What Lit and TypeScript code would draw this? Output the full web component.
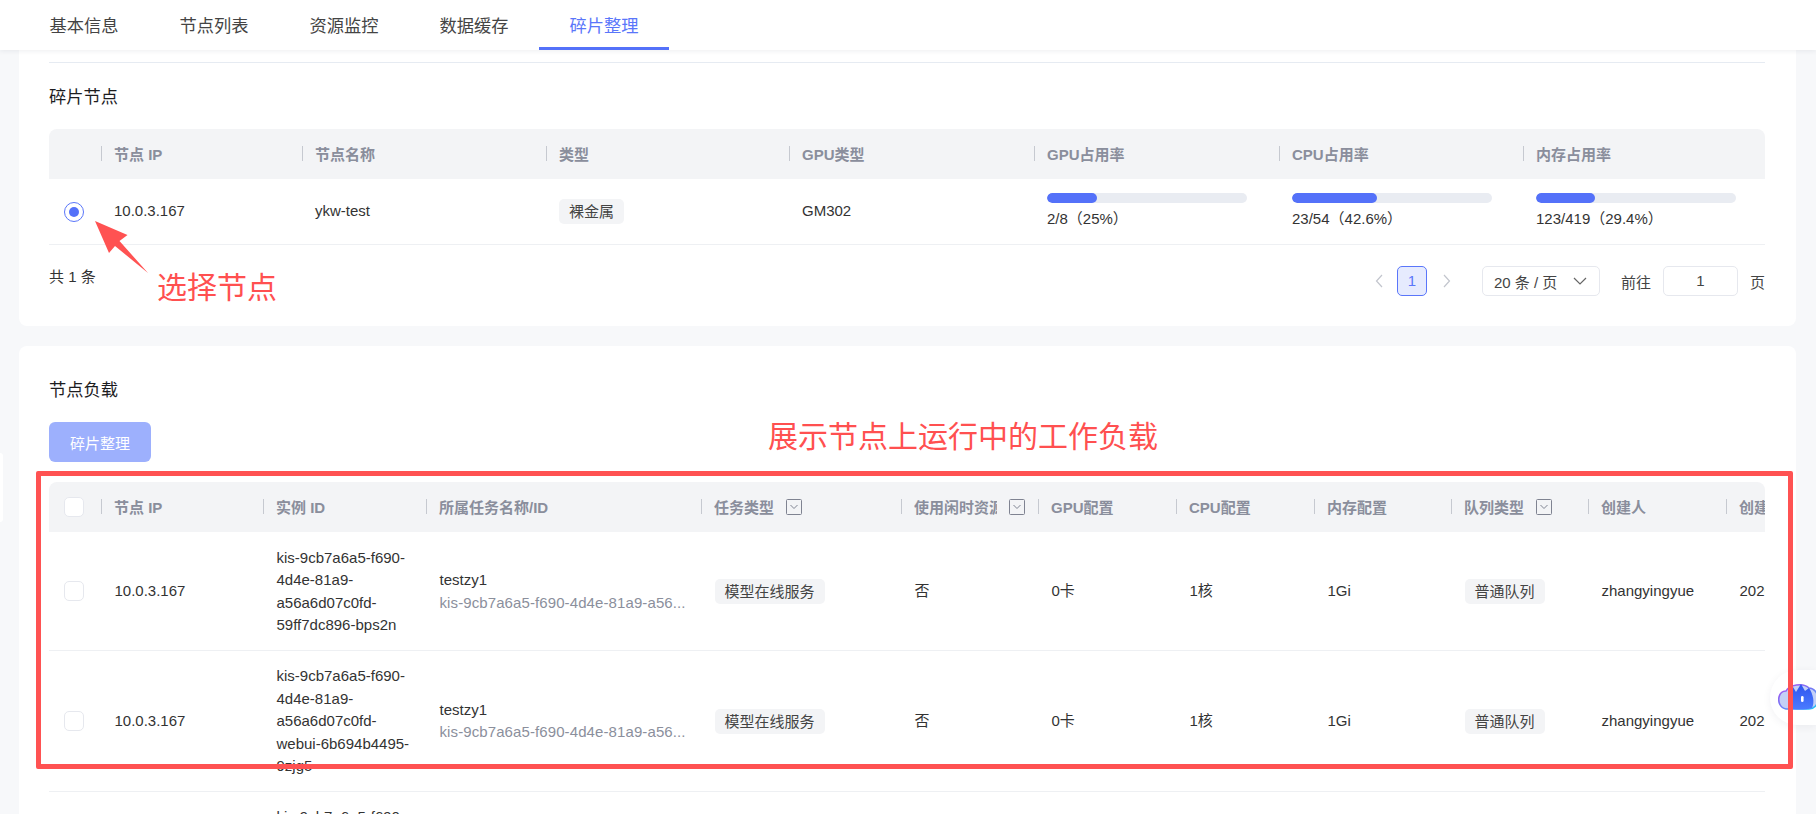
import { LitElement, html, css, svg } from 'lit';
import { customElement } from 'lit/decorators.js';

const NODE_COLS = [52, 201, 244, 243, 245, 245, 244, 242];
const LOAD_COLS = [52, 162, 163, 275, 200, 137, 138, 138, 137, 137, 138, 300];

const USAGE = [
  { pct: 25, text: '2/8（25%）' },
  { pct: 42.6, text: '23/54（42.6%）' },
  { pct: 29.4, text: '123/419（29.4%）' },
];

const LOAD_HEADERS = [
  { label: '节点 IP' },
  { label: '实例 ID' },
  { label: '所属任务名称/ID' },
  { label: '任务类型', filter: true },
  { label: '使用闲时资源', filter: true, clip: true },
  { label: 'GPU配置' },
  { label: 'CPU配置' },
  { label: '内存配置' },
  { label: '队列类型', filter: true },
  { label: '创建人' },
  { label: '创建时间' },
];

const TASK_ID = 'kis-9cb7a6a5-f690-4d4e-81a9-a56...';

const LOAD_ROWS = [
  'kis-9cb7a6a5-f690-4d4e-81a9-a56a6d07c0fd-59ff7dc896-bps2n',
  'kis-9cb7a6a5-f690-4d4e-81a9-a56a6d07c0fd-webui-6b694b4495-9zjg5',
  'kis-9cb7a6a5-f690-4d4e-81a9-a56a6d07c0fd-59ff7dc896-x7mkd',
];

@customElement('app-root')
export class AppRoot extends LitElement {
  static styles = css`
    :host {
      display: block;
      position: relative;
      height: 814px;
      overflow: hidden;
      background: #f7f8fa;
      color: #333;
      font-family: 'Liberation Sans', 'Noto Sans CJK SC', sans-serif;
      font-size: 15px;
    }

    .tabs {
      display: flex;
      position: relative;
      z-index: 2;
      height: 50px;
      padding-left: 19px;
      background: #fff;
      box-shadow: 0 1px 5px rgba(30, 40, 70, 0.08);
    }
    .tab {
      box-sizing: border-box;
      width: 130px;
      line-height: 52px;
      text-align: center;
      font-size: 17.25px;
      color: #444;
    }
    .tab.active {
      color: #5a76fa;
      border-bottom: 3px solid #5471f9;
    }

    .main {
      padding: 0 20px 0 19px;
    }
    .card {
      background: #fff;
      border-radius: 8px;
      padding: 32px 31px 30px 30px;
      margin-bottom: 20px;
    }
    .card.first {
      padding-top: 12px;
      border-radius: 0 0 8px 8px;
    }
    .rule {
      height: 1px;
      background: #e6ebf2;
      margin-bottom: 22px;
    }
    .title {
      font-size: 17.25px;
      line-height: 24px;
      color: #1d1d1f;
      margin-bottom: 20px;
    }

    .tidy {
      display: block;
      width: 102px;
      height: 40px;
      margin-bottom: 20px;
      padding: 0;
      border: none;
      border-radius: 6px;
      background: #9db0fd;
      color: #fff;
      font: inherit;
    }

    .table-wrap {
      overflow: hidden;
      border-radius: 8px 8px 0 0;
    }
    table {
      table-layout: fixed;
      border-collapse: collapse;
    }
    th {
      box-sizing: border-box;
      height: 50px;
      padding: 0 0 1px;
      background: #f3f4f6;
      text-align: left;
      font-weight: 700;
      color: #8a8e9c;
    }
    .th-label {
      display: flex;
      align-items: center;
      height: 15px;
      padding-left: 12px;
      border-left: 1px solid #c6c9d0;
      white-space: nowrap;
    }
    .clip {
      display: block;
      width: 83px;
      overflow: hidden;
    }
    .filter {
      flex: none;
      margin-left: 12px;
    }
    td {
      padding: 14.5px 13px 13px 13.5px;
      border-bottom: 1px solid #eef0f3;
      line-height: 22.5px;
      vertical-align: middle;
    }
    .nodes td {
      padding: 13.5px 13px 14px;
    }
    td.select,
    .nodes td.select {
      padding: 0 0 0 15px;
    }
    .instance {
      overflow-wrap: anywhere;
      word-break: normal;
    }
    .sub {
      color: #8b8f9c;
      white-space: nowrap;
      letter-spacing: 0.1px;
    }
    .nowrap {
      white-space: nowrap;
    }

    .radio {
      display: flex;
      align-items: center;
      justify-content: center;
      box-sizing: border-box;
      width: 20px;
      height: 20px;
      border: 1px solid #5a76fa;
      border-radius: 50%;
    }
    .radio i {
      width: 10px;
      height: 10px;
      border-radius: 50%;
      background: #5471f9;
    }
    .check {
      display: block;
      box-sizing: border-box;
      width: 20px;
      height: 20px;
      background: #fff;
      border: 1px solid #e6e8ee;
      border-radius: 5px;
    }
    th .check {
      margin-left: 15px;
    }
    .tag {
      display: inline-block;
      height: 25px;
      padding: 0 10px;
      line-height: 25px;
      border-radius: 5px;
      background: #f3f4f6;
      color: #444;
      vertical-align: middle;
    }
    .track {
      width: 200px;
      height: 10px;
      margin-bottom: 5px;
      border-radius: 5px;
      background: #e9ecf2;
      overflow: hidden;
    }
    .fill {
      height: 100%;
      border-radius: 5px;
      background: #5471f9;
    }

    .pager-row {
      display: flex;
      align-items: flex-start;
      justify-content: space-between;
      margin-top: 21px;
      height: 30px;
    }
    .total {
      line-height: 22px;
    }
    .pager {
      display: flex;
      align-items: center;
      color: #444;
    }
    .arrow {
      display: flex;
      align-items: center;
      justify-content: center;
      width: 30px;
      height: 30px;
    }
    .page {
      box-sizing: border-box;
      width: 30px;
      height: 30px;
      margin: 0 5px 0 3px;
      border: 1px solid #5a76fa;
      border-radius: 5px;
      background: #e6ebfe;
      color: #5a76fa;
      line-height: 28px;
      text-align: center;
    }
    .size {
      display: flex;
      align-items: center;
      justify-content: space-between;
      box-sizing: border-box;
      width: 118px;
      height: 30px;
      margin: 0 21px 0 20px;
      padding: 0 12px 0 11px;
      border: 1px solid #e6e8ee;
      border-radius: 5px;
    }
    .jump {
      box-sizing: border-box;
      width: 75px;
      height: 30px;
      margin: 0 12px;
      border: 1px solid #e6e8ee;
      border-radius: 5px;
      line-height: 28px;
      text-align: center;
    }

    .edge {
      position: absolute;
      left: 0;
      top: 453px;
      width: 3px;
      height: 69px;
      background: #fff;
      border-radius: 0 6px 6px 0;
    }
    .assistant {
      position: absolute;
      right: 0;
      top: 670px;
      width: 46px;
      height: 55px;
      background: #fff;
      border-radius: 28px 0 0 28px;
      box-shadow: 0 2px 8px rgba(30, 40, 70, 0.06);
    }
    .assistant svg {
      position: absolute;
      left: 8px;
      top: 12px;
    }
    .note {
      position: absolute;
      font-size: 30px;
      line-height: 36px;
      color: #ff5050;
      white-space: nowrap;
    }
    .note.pick {
      left: 157px;
      top: 270px;
    }
    .note.loads {
      left: 768px;
      top: 419px;
    }
    .pointer {
      position: absolute;
      left: 90px;
      top: 216px;
    }
    .frame {
      position: absolute;
      left: 36px;
      top: 471px;
      box-sizing: border-box;
      width: 1757px;
      height: 298px;
      border: 5px solid #ff5252;
      border-radius: 2px;
    }
  `;

  private chevron(points: string, color: string, width = 12) {
    return html`<svg width=${width} height="16" viewBox="0 0 ${width} 16" fill="none">
      <polyline points=${points} stroke=${color} stroke-width="1.2" />
    </svg>`;
  }

  private filterIcon() {
    return html`<svg class="filter" width="16" height="16" viewBox="0 0 16 16" fill="none" stroke="#7f8391">
      <rect x="0.5" y="0.5" width="15" height="15" rx="1" />
      <polyline points="4.5,6 8,9.5 11.5,6" />
    </svg>`;
  }

  private colgroup(widths: number[]) {
    return html`<colgroup>
      ${widths.map((w) => html`<col style="width:${w}px" />`)}
    </colgroup>`;
  }

  private logo() {
    return html`<svg width="40" height="30" viewBox="0 0 40 30" fill="none">
      <defs>
        <linearGradient id="rim" x1="0" y1="0" x2="0.9" y2="1">
          <stop offset="0" stop-color="#b04df0" />
          <stop offset="0.55" stop-color="#6f7cf6" />
          <stop offset="1" stop-color="#27c4f2" />
        </linearGradient>
        <linearGradient id="flame" x1="0" y1="0" x2="0" y2="1">
          <stop offset="0" stop-color="#2f55ee" />
          <stop offset="1" stop-color="#4a7bff" />
        </linearGradient>
      </defs>
      ${svg`<path d="M8 27C2 26 0 20 1 15C2 11 5 9 8 9C11 3 25 0 31 6C36 6 40 11 40 17C40 23 36 27 31 27Z" fill="#c3d0f7" stroke="url(#rim)" stroke-width="1.6" />
      <path d="M11 26C9 18 12 10 15 5L18 10L23 2L27 9L31 6C35 12 37 20 34 26C28 28 16 28 11 26Z" fill="url(#flame)" />
      <rect x="23" y="14" width="2.6" height="6" rx="1.3" fill="#fff" />`}
    </svg>`;
  }

  private renderNodes() {
    return html`
      <div class="table-wrap">
        <table class="nodes" style="width:${NODE_COLS.reduce((a, b) => a + b, 0)}px">
          ${this.colgroup(NODE_COLS)}
          <thead>
            <tr>
              <th></th>
              ${['节点 IP', '节点名称', '类型', 'GPU类型', 'GPU占用率', 'CPU占用率', '内存占用率'].map(
                (h) => html`<th><span class="th-label">${h}</span></th>`,
              )}
            </tr>
          </thead>
          <tbody>
            <tr>
              <td class="select"><span class="radio"><i></i></span></td>
              <td>10.0.3.167</td>
              <td>ykw-test</td>
              <td><span class="tag">裸金属</span></td>
              <td>GM302</td>
              ${USAGE.map(
                (u) => html`<td>
                  <div class="track"><div class="fill" style="width:${u.pct}%"></div></div>
                  <div class="nowrap">${u.text}</div>
                </td>`,
              )}
            </tr>
          </tbody>
        </table>
      </div>
      <div class="pager-row">
        <span class="total">共 1 条</span>
        <div class="pager">
          <span class="arrow">${this.chevron('9,2 3.5,8 9,14', '#c2c5cd')}</span>
          <span class="page">1</span>
          <span class="arrow">${this.chevron('3,2 8.5,8 3,14', '#c2c5cd')}</span>
          <span class="size">20 条 / 页 ${this.chevron('1,5 7,11 13,5', '#666', 14)}</span>
          <span>前往</span>
          <span class="jump">1</span>
          <span>页</span>
        </div>
      </div>
    `;
  }

  private renderLoads() {
    return html`
      <div class="table-wrap">
        <table style="width:${LOAD_COLS.reduce((a, b) => a + b, 0)}px">
          ${this.colgroup(LOAD_COLS)}
          <thead>
            <tr>
              <th><span class="check"></span></th>
              ${LOAD_HEADERS.map(
                (h) => html`<th>
                  <span class="th-label">
                    ${h.clip ? html`<span class="clip">${h.label}</span>` : h.label}
                    ${h.filter ? this.filterIcon() : ''}
                  </span>
                </th>`,
              )}
            </tr>
          </thead>
          <tbody>
            ${LOAD_ROWS.map(
              (id) => html`<tr>
                <td class="select"><span class="check"></span></td>
                <td>10.0.3.167</td>
                <td class="instance">${id}</td>
                <td>
                  <div>testzy1</div>
                  <div class="sub">${TASK_ID}</div>
                </td>
                <td><span class="tag">模型在线服务</span></td>
                <td>否</td>
                <td>0卡</td>
                <td>1核</td>
                <td>1Gi</td>
                <td><span class="tag">普通队列</span></td>
                <td>zhangyingyue</td>
                <td class="nowrap">2026-01-19 10:30:15</td>
              </tr>`,
            )}
          </tbody>
        </table>
      </div>
    `;
  }

  render() {
    return html`
      <div class="tabs">
        ${['基本信息', '节点列表', '资源监控', '数据缓存'].map((t) => html`<div class="tab">${t}</div>`)}
        <div class="tab active">碎片整理</div>
      </div>
      <div class="main">
        <section class="card first">
          <div class="rule"></div>
          <div class="title">碎片节点</div>
          ${this.renderNodes()}
        </section>
        <section class="card">
          <div class="title">节点负载</div>
          <button class="tidy">碎片整理</button>
          ${this.renderLoads()}
        </section>
      </div>

      <div class="edge"></div>
      <div class="assistant">${this.logo()}</div>

      <svg class="pointer" width="60" height="60" viewBox="90 216 60 60">
        <polygon points="95,221 127.5,235 119.5,241 148,273 115,246 109,253" fill="#ff5252" />
      </svg>
      <div class="note pick">选择节点</div>
      <div class="note loads">展示节点上运行中的工作负载</div>
      <div class="frame"></div>
    `;
  }
}
